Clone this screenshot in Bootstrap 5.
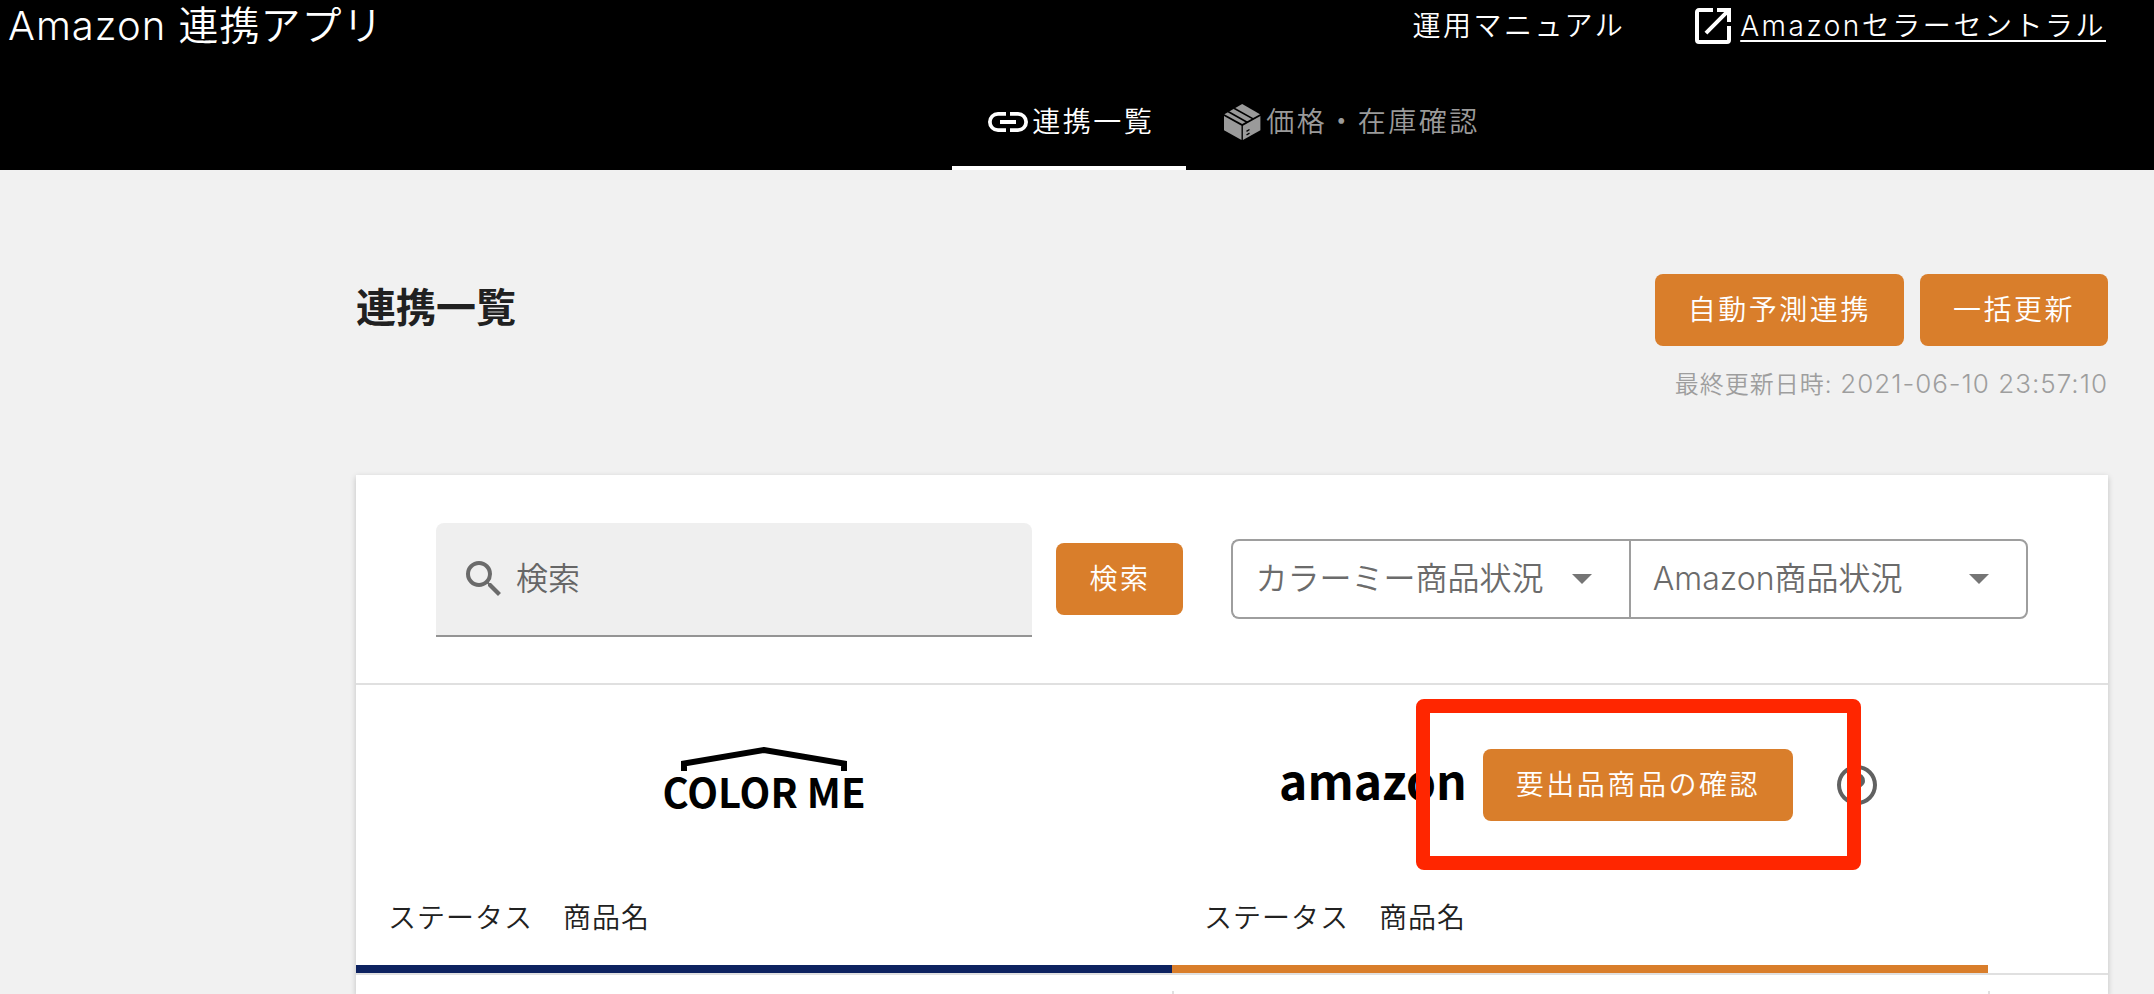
<!DOCTYPE html>
<html lang="ja">
<head>
<meta charset="utf-8">
<meta name="viewport" content="width=device-width, initial-scale=1">
<title>Amazon 連携アプリ</title>
<link href="https://cdn.jsdelivr.net/npm/bootstrap@5.3.0/dist/css/bootstrap.min.css" rel="stylesheet">
<style>
  :root { --accent: #d97e2b; --navy: #0d2260; --rule: #e0e0e0; --text-weight: 350; }
  body {
    font-family: Inter, "Noto Sans CJK JP", sans-serif;
    font-weight: var(--text-weight); font-size: 28px; line-height: 40px;
    color: #212121; background: #f1f1f1;
  }
  .icon-lg { width: 48px; height: 48px; flex: none; fill: currentColor; }
  .page-inset { padding-left: 356px; padding-right: 46px; }
  .spaced { letter-spacing: .09em; }

  .app-header { background: #000; color: #fff; }
  .title-bar { height: 52px; margin-bottom: 22px; padding: 0 48px 0 8px; }
  .app-title { font-size: 40px; line-height: 52px; letter-spacing: 1px; }
  .title-links { gap: 64px; }
  .title-links a { color: #fff; }
  .gap-icon { gap: 3px; }
  .underlined { text-decoration: underline; text-decoration-thickness: 2px; text-underline-offset: 4px; }
  .app-tabs .nav-link {
    height: 96px; padding: 0 32px; color: #9a9a9a; border-bottom: 4px solid transparent; border-top: 4px solid transparent;
  }
  .app-tabs .nav-link.active { color: #fff; border-bottom-color: #fff; }

  .page-head { padding-top: 104px; padding-bottom: 74px; }
  .page-title { font-size: 40px; line-height: 68px; font-weight: 700; }
  .stamp { font-size: 24px; line-height: 32px; margin-top: 22px; color: #9e9e9e; letter-spacing: 1px; }
  .stamp time { font-size: 26px; }
  .btn-accent {
    --bs-btn-bg: var(--accent); --bs-btn-color: #fff; --bs-btn-hover-bg: #c46f22; --bs-btn-hover-color: #fff;
    --bs-btn-padding-x: 33px; --bs-btn-padding-y: 16px; --bs-btn-font-size: 28px; --bs-btn-line-height: 40px;
    --bs-btn-border-width: 0; --bs-btn-border-radius: 8px; --bs-btn-font-weight: var(--text-weight);
    letter-spacing: .09em; white-space: nowrap;
  }

  .panel { background: #fff; box-shadow: 0 2px 6px rgba(0,0,0,.2); }
  .filters { padding: 48px 80px 46px; border-bottom: 2px solid var(--rule); }
  .filters .btn, .filters .selects { margin-bottom: 2px; }
  .search-box {
    flex: 596 1 596px; height: 114px; padding: 0 24px; gap: 8px; background: #efefef; color: #6b6b6b;
    border-bottom: 2px solid #949494; border-radius: 8px 8px 0 0; margin-right: 24px;
  }
  .search-box .form-control { font-size: 32px; font-weight: var(--text-weight); padding: 0; border: 0; background: none; box-shadow: none; }
  .search-box .form-control::placeholder { color: #666; opacity: 1; }
  .selects { flex: 796 1 796px; margin-left: 48px; }
  .selects .form-select {
    --bs-form-select-bg-img: url("data:image/svg+xml,%3csvg xmlns='http://www.w3.org/2000/svg' viewBox='0 0 20 10'%3e%3cpath fill='%23757575' d='M0 0h20L10 10z'/%3e%3c/svg%3e");
    flex: 1 1 0; min-width: 0; height: 80px; padding: 0 64px 0 22px; font-size: 32px; font-weight: var(--text-weight); color: #6b6b6b;
    border: 2px solid #9e9e9e; border-radius: 8px; background-size: 20px 10px; background-position: right 37px center;
    background-image: var(--bs-form-select-bg-img); background-color: #fff;
  }
  .selects .form-select:first-child { border-radius: 8px 0 0 8px; border-right: 0; }
  .selects .form-select:last-child { border-radius: 0 8px 8px 0; }

  .listing { width: 100%; table-layout: fixed; border-collapse: separate; border-spacing: 0; }
  .listing .c-side { width: 120px; }
  .listing th { font-weight: var(--text-weight); padding: 0; }
  .brands th { height: 200px; vertical-align: middle; }
  .labels th {
    height: 88px; padding: 12px 32px 26px; vertical-align: middle; letter-spacing: 1px;
    border-bottom: 8px solid transparent;
  }
  .labels .label-pair { gap: 30px; }
  .labels .bar-navy { border-bottom-color: var(--navy); }
  .labels .bar-accent { border-bottom-color: var(--accent); }
  .rows td { border-top: 2px solid var(--rule); padding: 16px 0 0; height: 22px; }
  .rows td + td > div { border-left: 2px solid var(--rule); }
  .rows td > div { height: 4px; }

  .logo-colorme, .logo-amazon { font-family: "Noto Sans CJK JP", sans-serif; font-weight: 700; color: #000; padding-bottom: 12px; }
  .logo-colorme { font-size: 40px; line-height: 40px; }
  .logo-colorme svg { width: 166px; height: 24px; }
  .logo-amazon { font-size: 48px; line-height: 60px; margin-right: 16px; }
  .help { border: 0; background: none; padding: 0; margin-left: 40px; color: #616161; }
  .callout { top: -50px; bottom: -49px; left: -67px; right: -68px; border: 14px solid #ff2600; border-radius: 8px; pointer-events: none; }
</style>
</head>
<body class="min-vh-100 d-flex flex-column">

<header class="app-header">
  <div class="title-bar d-flex justify-content-between align-items-center">
    <div class="app-title">Amazon 連携アプリ</div>
    <div class="title-links d-flex align-items-center spaced">
      <a href="#" class="text-decoration-none">運用マニュアル</a>
      <a href="#" class="d-flex align-items-center text-decoration-none gap-icon">
        <svg class="icon-lg" viewBox="0 0 24 24" aria-hidden="true"><path d="M14 3v2h3.59l-9.83 9.83 1.41 1.41L19 6.41V10h2V3m-2 16H5V5h7V3H5c-1.11 0-2 .9-2 2v14a2 2 0 0 0 2 2h14a2 2 0 0 0 2-2v-7h-2v7z"/></svg>
        <span class="underlined">Amazonセラーセントラル</span>
      </a>
    </div>
  </div>
  <nav class="page-inset">
    <ul class="nav app-tabs justify-content-center spaced">
      <li class="nav-item">
        <a class="nav-link active d-flex align-items-center" aria-current="page" href="#">
          <svg class="icon-lg" viewBox="0 0 24 24" aria-hidden="true"><path d="M3.9 12c0-1.71 1.39-3.1 3.1-3.1h4V7H7a5 5 0 0 0 0 10h4v-1.9H7c-1.71 0-3.1-1.39-3.1-3.1M8 13h8v-2H8v2m9-6h-4v1.9h4c1.71 0 3.1 1.39 3.1 3.1s-1.39 3.1-3.1 3.1h-4V17h4a5 5 0 0 0 0-10z"/></svg>
          連携一覧
        </a>
      </li>
      <li class="nav-item">
        <a class="nav-link d-flex align-items-center" href="#">
          <svg class="icon-lg" viewBox="0 0 48 48" aria-hidden="true">
            <path d="M24.200 6L42 16.200 24.200 26 6.400 16.200z"/>
            <path d="M16 10.200L36 21.400M10 13.500L30 24.700" stroke="#000" stroke-width="1.600"/>
            <path d="M6 18L23.500 27.700V42L6 32.300zM42.400 18L24.900 27.700V42L42.400 32.300z"/>
            <path d="M28.500 33.300l3-1.800M28.500 37l3-1.800" stroke="#000" stroke-width="1.400"/>
          </svg>
          価格・在庫確認
        </a>
      </li>
    </ul>
  </nav>
</header>

<main class="page-inset flex-grow-1 d-flex flex-column">
  <div class="page-head d-flex justify-content-between align-items-start">
    <h1 class="page-title mb-0">連携一覧</h1>
    <div class="text-end">
      <div class="d-flex justify-content-end gap-3">
        <button type="button" class="btn btn-accent">自動予測連携</button>
        <button type="button" class="btn btn-accent">一括更新</button>
      </div>
      <div class="stamp">最終更新日時: <time datetime="2021-06-10T23:57:10">2021-06-10 23:57:10</time></div>
    </div>
  </div>

  <section class="panel flex-grow-1">
    <form class="filters d-flex align-items-center">
      <div class="search-box d-flex align-items-center">
        <svg class="icon-lg" viewBox="0 0 24 24" aria-hidden="true"><path d="M15.500 14h-.79l-.28-.27A6.470 6.470 0 0 0 16 9.500 6.500 6.500 0 1 0 9.500 16c1.610 0 3.090-.59 4.230-1.570l.27.28v.79l5 4.990L20.490 19l-4.990-5m-6 0C7.010 14 5 11.990 5 9.500S7.010 5 9.500 5 14 7.010 14 9.500 11.990 14 9.500 14z"/></svg>
        <input type="text" class="form-control" placeholder="検索" aria-label="検索">
      </div>
      <button type="button" class="btn btn-accent">検索</button>
      <div class="selects d-flex">
        <select class="form-select" aria-label="カラーミー商品状況"><option>カラーミー商品状況</option></select>
        <select class="form-select" aria-label="Amazon商品状況"><option>Amazon商品状況</option></select>
      </div>
    </form>

    <table class="listing">
      <colgroup><col><col><col class="c-side"></colgroup>
      <thead>
        <tr class="brands">
          <th scope="col">
            <div class="logo-colorme d-flex flex-column align-items-center">
              <svg viewBox="0 0 166 24" aria-hidden="true"><path d="M3 24V16.500L83 3l80 13.500V24" fill="none" stroke="#000" stroke-width="6"/></svg>
              COLOR ME
            </div>
          </th>
          <th scope="col">
            <div class="d-flex justify-content-center align-items-center">
              <span class="logo-amazon">amazon</span>
              <div class="position-relative">
                <button type="button" class="btn btn-accent">要出品商品の確認</button>
                <div class="callout position-absolute z-1"></div>
              </div>
              <button type="button" class="help d-flex" aria-label="ヘルプ">
                <svg class="icon-lg" viewBox="0 0 24 24" aria-hidden="true"><path d="M11 18h2v-2h-2v2m1-16a10 10 0 1 0 0 20 10 10 0 0 0 0-20m0 18c-4.410 0-8-3.590-8-8s3.590-8 8-8 8 3.590 8 8-3.590 8-8 8m0-14a4 4 0 0 0-4 4h2a2 2 0 1 1 4 0c0 2-3 1.750-3 5h2c0-2.250 3-2.500 3-5a4 4 0 0 0-4-4z"/></svg>
              </button>
            </div>
          </th>
          <th></th>
        </tr>
        <tr class="labels">
          <th scope="col" class="bar-navy"><div class="label-pair d-flex"><span>ステータス</span><span>商品名</span></div></th>
          <th scope="col" class="bar-accent"><div class="label-pair d-flex"><span>ステータス</span><span>商品名</span></div></th>
          <th></th>
        </tr>
      </thead>
      <tbody>
        <tr class="rows"><td><div></div></td><td><div></div></td><td><div></div></td></tr>
      </tbody>
    </table>
  </section>
</main>

<script src="https://cdn.jsdelivr.net/npm/bootstrap@5.3.0/dist/js/bootstrap.bundle.min.js"></script>
</body>
</html>
